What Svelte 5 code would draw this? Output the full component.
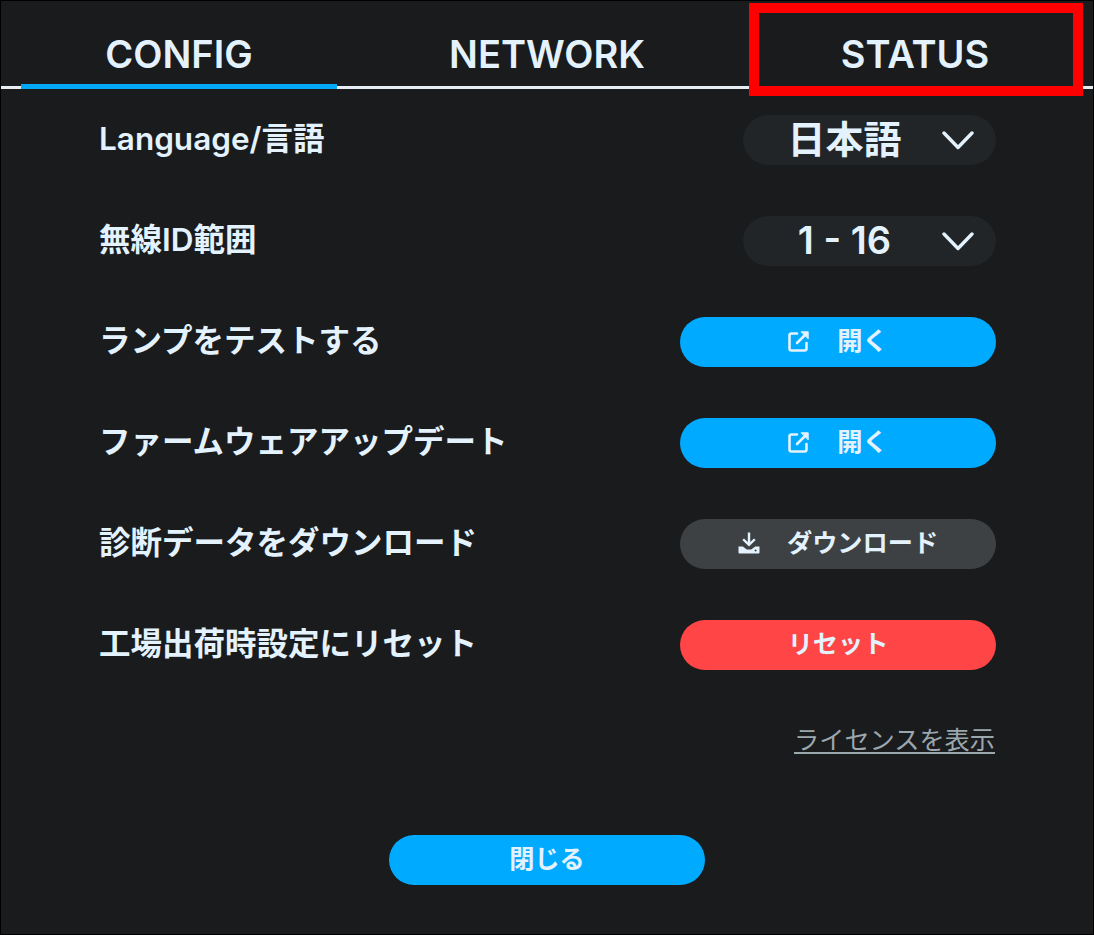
<script>
  const tabs = ['CONFIG', 'NETWORK', 'STATUS'];
  let active = $state('CONFIG');
</script>

{#snippet chevron()}
  <svg class="chevron" viewBox="0 0 32 20" width="32" height="20" fill="none" stroke="currentColor" stroke-width="3.4" stroke-linecap="round" stroke-linejoin="round">
    <path d="M2 3 L16 17.5 L30 3" />
  </svg>
{/snippet}

{#snippet external()}
  <svg class="icon" viewBox="0 0 22 22" width="22" height="22" fill="none" stroke="currentColor" stroke-width="2.6" stroke-linecap="round" stroke-linejoin="round">
    <path d="M9 3.5 H3.5 Q1.5 3.5 1.5 5.5 V18.5 Q1.5 20.5 3.5 20.5 H16.5 Q18.5 20.5 18.5 18.5 V13" />
    <path d="M9 13 L18 4" />
    <path d="M13.5 1.8 H20.2 V8.5 Z" fill="currentColor" stroke-width="1" />
  </svg>
{/snippet}

{#snippet download()}
  <svg class="icon" viewBox="0 0 22 22" width="22" height="22" fill="currentColor">
    <path d="M9.8 0.5 H12.2 V10 L16 6.4 L17.7 8 L11 14.4 L4.3 8 L6 6.4 L9.8 10 Z" />
    <path fill-rule="evenodd" d="M0.5 14.5 H4.8 L8.8 17.4 H13.2 L17.2 14.5 H21.5 V20.6 Q21.5 21.6 20.5 21.6 H1.5 Q0.5 21.6 0.5 20.6 Z M16.6 18.4 a1 1 0 1 0 2 0 a1 1 0 1 0 -2 0 Z" />
  </svg>
{/snippet}

<div class="screen">
  <nav class="tabs">
    {#each tabs as t}
      <button class="tab" class:active={active === t} onclick={() => (active = t)}>{t}</button>
    {/each}
  </nav>

  <div class="rows">
    <div class="row">
      <span class="label">Language/言語</span>
      <div class="select"><span class="value">日本語</span>{@render chevron()}</div>
    </div>
    <div class="row">
      <span class="label">無線ID範囲</span>
      <div class="select"><span class="value">1 - 16</span>{@render chevron()}</div>
    </div>
    <div class="row">
      <span class="label">ランプをテストする</span>
      <button class="btn primary">{@render external()}<span>開く</span></button>
    </div>
    <div class="row">
      <span class="label">ファームウェアアップデート</span>
      <button class="btn primary">{@render external()}<span>開く</span></button>
    </div>
    <div class="row">
      <span class="label">診断データをダウンロード</span>
      <button class="btn grey">{@render download()}<span>ダウンロード</span></button>
    </div>
    <div class="row">
      <span class="label">工場出荷時設定にリセット</span>
      <button class="btn danger"><span>リセット</span></button>
    </div>
  </div>

  <div class="license"><a href="#license">ライセンスを表示</a></div>

  <div class="footer">
    <button class="btn primary close"><span>閉じる</span></button>
  </div>

  <div class="highlight"></div>
</div>

<style>
  :global(body) {
    margin: 0;
    background: #191b1d;
  }

  .screen {
    position: relative;
    width: 1094px;
    height: 935px;
    box-sizing: border-box;
    border: 1px solid #000;
    background: #191b1d;
    color: #e3f2fd;
    font-family: Inter, "Noto Sans CJK JP", sans-serif;
    overflow: hidden;
  }

  .tabs {
    display: flex;
    align-items: flex-start;
    gap: 52px;
    height: 85px;
    padding: 0 20px;
    border-bottom: 3px solid #e6eef4;
  }

  .tab {
    flex: none;
    width: 316px;
    height: 88px;
    padding: 18px 0 0;
    border: none;
    background: transparent;
    color: inherit;
    font: inherit;
    font-size: 38px;
    font-weight: 600;
    cursor: pointer;
  }

  .tab.active {
    padding-top: 23px;
    border-bottom: 5px solid #00a8f5;
  }

  .rows {
    display: flex;
    flex-direction: column;
    gap: 50.8px;
    padding: 26px 97px 0 98px;
  }

  .row {
    display: flex;
    align-items: center;
    justify-content: space-between;
    height: 50.2px;
  }

  .label {
    font-size: 31.5px;
    font-weight: 600;
    line-height: 40px;
    padding-bottom: 2px;
  }

  .select {
    display: flex;
    align-items: center;
    width: 253px;
    height: 50px;
    box-sizing: border-box;
    border-radius: 25px;
    background: #212527;
    font-size: 38px;
    font-weight: 600;
  }

  .value {
    flex: 1;
    text-align: center;
    line-height: 44px;
    padding: 0 0 2px 4px;
  }

  .chevron {
    margin-right: 22px;
    flex: none;
  }

  .btn {
    display: flex;
    align-items: center;
    justify-content: center;
    gap: 27px;
    width: 316px;
    height: 50px;
    padding: 0 0 2px;
    border: none;
    border-radius: 25px;
    color: #e3f2fd;
    font: inherit;
    font-size: 25.2px;
    line-height: 32px;
    font-weight: 600;
    cursor: pointer;
  }

  .primary {
    background: #00aaff;
  }

  .grey {
    background: #3d4144;
  }

  .danger {
    background: #ff4545;
  }

  .license {
    display: flex;
    justify-content: flex-end;
    padding: 51px 98px 0 0;
    font-size: 25.2px;
    line-height: 38px;
  }

  .license a {
    color: #9ba7ad;
    text-decoration: underline;
    text-underline-offset: 3px;
  }

  .footer {
    display: flex;
    justify-content: center;
    padding-top: 76px;
  }

  .highlight {
    position: absolute;
    left: 747.5px;
    top: 2.3px;
    width: 334px;
    height: 92.7px;
    box-sizing: border-box;
    border: 10.5px solid #ff0000;
    pointer-events: none;
  }
</style>
